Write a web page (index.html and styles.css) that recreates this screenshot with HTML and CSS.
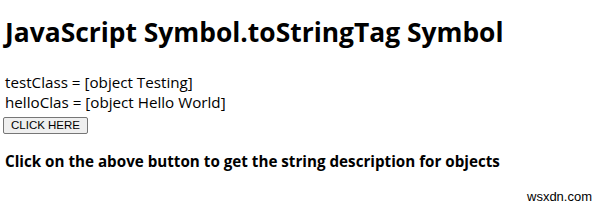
FILE: index.html
```html
<!DOCTYPE html>
<html lang="en">

<head>
    <meta charset="UTF-8">
    <title>Symbol.toStringTag</title>
    <link rel="stylesheet" href="styles.css">
</head>

<body>
    <h1>JavaScript Symbol.toStringTag Symbol</h1>
    <div class="result" id="result">
        <div>testClass = [object Testing]</div>
        <div>helloClas = [object Hello World]</div>
    </div>
    <button class="btn">CLICK HERE</button>
    <h3>Click on the above button to get the string description for objects</h3>
    <div class="mark">wsxdn.com</div>
</body>

</html>
```

FILE: styles.css
```css
body {
    margin: 0;
    padding: 0 5px;
    font-family: "Open Sans", "Noto Sans", sans-serif;
    color: #000;
    background: #fff;
    position: relative;
    height: 211px;
}

h1 {
    margin: 0;
    padding-top: 15px;
    font-size: 26.4px;
    line-height: 34px;
    font-weight: bold;
}

.result {
    margin-top: 23px;
    font-size: 15.2px;
    line-height: 20px;
}

.btn {
    display: block;
    margin: 5px 0 0 -2px;
    padding: 0 7px;
    height: 17px;
    font-family: "Liberation Sans", Arial, sans-serif;
    font-size: 11.5px;
    line-height: 15px;
    color: #000;
    background: #efefef;
    border: 1px solid #767676;
    border-radius: 2px;
}

h3 {
    margin: 17px 0 0;
    font-size: 15.2px;
    line-height: 20px;
}

.mark {
    position: absolute;
    left: 527px;
    top: 189px;
    font-family: "Liberation Sans", Arial, sans-serif;
    font-size: 13px;
}
```
